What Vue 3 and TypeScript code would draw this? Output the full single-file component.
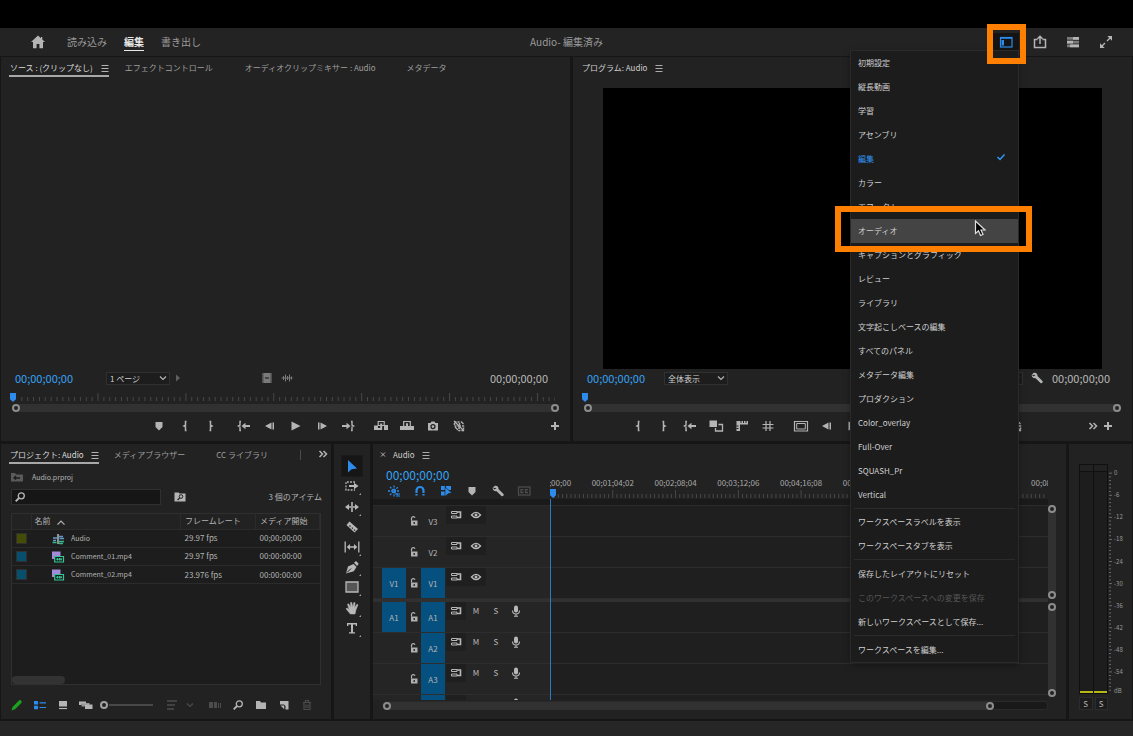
<script setup lang="ts">
interface MenuItem {
  label: string
  state?: 'checked' | 'hover' | 'disabled'
}

const icons: Record<string, string> = {
  home: '<path d="M8 1.500 1 8h2v6.200h3.600V10h2.800v4.200H13V8h2L12.300 5.400V3H11v1.200z" fill="currentColor"/>',
  burger: '<path d="M4.500 5.500h7M4.500 8.500h7M4.500 11.500h7" stroke="currentColor" opacity=".8" fill="none"/>',
  workspace: '<rect x="2.500" y="3.500" width="11.500" height="9.500" fill="none" stroke="currentColor" stroke-width="1.200"/><path d="M2 4h12" stroke="currentColor" stroke-width="1.500"/><path d="M3.500 6h2.500v5.500H3.500z" fill="currentColor"/>',
  share: '<path d="M5.500 5.500H2.500V13.500h11V5.500H10.500M8 10V2.500M5.500 4.800 8 2.300l2.500 2.500" fill="none" stroke="currentColor" stroke-width="1.500"/>',
  progress: '<path d="M2 3h12v2.800H2zM2 6.700h12v2.800H2zM2 10.400h12v2.800H2z" fill="currentColor" opacity=".6"/><path d="M8 3h6v2.800H8zM2 6.700h6v2.800H2zM5 10.400h9v2.800H5z" fill="currentColor"/>',
  expand: '<path d="M9 7l4-4M7 9l-4 4" stroke="currentColor" stroke-width="1.300"/><path d="M9.300 2H14v4.700zM2 9.300V14h4.700z" fill="currentColor"/>',
  check: '<path d="M4.500 8l2.500 2.500L11.500 5.500" fill="none" stroke="currentColor" stroke-width="1.500"/>',
  chevron: '<path d="M5 6.500 8 9.500 11 6.500" fill="none" stroke="currentColor" stroke-width="1.200"/>',
  caretUp: '<path d="M4 11 8 7l4 4" fill="none" stroke="currentColor" stroke-width="1.500"/>',
  right: '<path d="M6 4.500v7L10 8z" fill="currentColor"/>',
  film: '<path d="M3.500 3h9v10h-9z" fill="currentColor"/><path d="M6 8h4" stroke="#222" stroke-width="1.200"/><path d="M4.500 3.500v9M11.500 3.500v9" stroke="#222" stroke-dasharray="1 1" opacity=".5"/>',
  wave: '<path d="M2.500 8h11M4.500 6v4M6.500 4.500v7M8.500 6v4M10.500 4.500v7M12.500 6.500v3" stroke="currentColor" fill="none"/>',
  marker: '<path d="M4.500 4h7v5L8 12.500 4.500 9z" fill="currentColor"/>',
  markIn: '<path d="M9.500 3.500H8.500v3.700L7 8l1.500.800v3.700h1" fill="none" stroke="currentColor" stroke-width="1.500"/>',
  markOut: '<path d="M6.500 3.500h1v3.700L9 8l-1.500.800v3.700h-1" fill="none" stroke="currentColor" stroke-width="1.500"/>',
  goIn: '<path d="M5 3.500H4v3.700L2.500 8 4 8.800v3.700h1" fill="none" stroke="currentColor" stroke-width="1.400"/><path d="M5.500 8l4-3.200v2.200H14v2H9.500v2.200z" fill="currentColor"/>',
  goOut: '<path d="M11 3.500h1v3.700l1.500.800-1.500.800v3.700h-1" fill="none" stroke="currentColor" stroke-width="1.400"/><path d="M10.500 8l-4-3.200V7H2v2h4.500v2.200z" fill="currentColor"/>',
  stepBack: '<path d="M9.500 4.500v7L3 8zM10.500 4.500H12v7h-1.500z" fill="currentColor"/>',
  stepFwd: '<path d="M6.500 4.500v7L13 8zM4 4.500h1.500v7H4z" fill="currentColor"/>',
  play: '<path d="M3.500 3.500v9L12.500 8z" fill="currentColor"/>',
  insert: '<path d="M1 7.500h4v4.500H1zM11 7h4v5h-4zM1 10h8v2H1z" fill="currentColor"/><path d="M5.200 3.500h6v4h-6z" fill="#222" stroke="currentColor" stroke-width="1.200"/><path d="M7.200 5.500h2V12h-2z" fill="currentColor"/>',
  overwrite: '<path d="M1 8h14v4H1z" fill="currentColor"/><path d="M4.700 3.500h6.600v5H4.700z" fill="#222" stroke="currentColor" stroke-width="1.200"/><path d="M7 5.300h2V9H7z" fill="currentColor"/>',
  camera: '<path d="M3 5h2.500l1-1.500h3l1 1.500H13v7.500H3z" fill="currentColor"/><circle cx="8" cy="8.600" r="2" fill="none" stroke="#222" stroke-width="1.300"/>',
  compare: '<path d="M3.500 4h5v4h-5zM8 8h4.500v4.500H8z" fill="none" stroke="currentColor" stroke-dasharray="2 1" stroke-width="1.500"/><path d="M3 3l10 10M10 3.500l2.500 2.500M4 9l3 3" stroke="currentColor" stroke-width="1.200"/>',
  plus: '<path d="M7 4h2v3h3v2H9v3H7V9H4V7h3z" fill="currentColor"/>',
  proxy: '<path d="M1.500 2.500h7.500v6.500H1.500z" fill="currentColor"/><path d="M10.500 6.500h4v6.500H7.500v-3" fill="none" stroke="currentColor" stroke-width="1.300"/>',
  rulers: '<path d="M2.500 3H14v3.500H6V13H2.500z" fill="currentColor"/><path d="M7 3v2M9.500 3v2M12 3v2M2.500 8h2M2.500 10.500h2" stroke="#222"/>',
  grid: '<path d="M6 3v10M10 3v10M2.500 6.500h11M2.500 10h11" stroke="currentColor" stroke-width="1.200"/>',
  safe: '<path d="M1.500 3.500h13v9.500h-13z" fill="none" stroke="currentColor" stroke-width="1.200"/><path d="M3.700 5.500h8.600V11H3.700z" fill="none" stroke="currentColor"/>',
  more: '<path d="M4.500 5l3 3-3 3M8.500 5l3 3-3 3" fill="none" stroke="currentColor" stroke-width="1.500"/>',
  wrench: '<path d="M2.700 4.800 4.800 2.800c2.200-.600 4 .900 3.700 3.100l5 5c.900 1.200-.800 2.900-2 2L6.600 8.300C4.400 8.700 2.400 7 2.700 4.800l2 1.700L6.500 5z" fill="currentColor"/>',
  folder: '<path d="M3 4h4l1 1.500h5V12H3z" fill="currentColor"/>',
  folderUp: '<path d="M2 4h4l1 1.500h7V12.500H2z" fill="currentColor"/><path d="M5 9h6M7 7 5 9l2 1.500" fill="none" stroke="#1c1c1c" stroke-width="1.300"/>',
  folderFind: '<path d="M2.500 3.500h4l1 1h6V12.500h-11z" fill="currentColor"/><circle cx="9" cy="7.500" r="1.800" fill="none" stroke="#222"/><path d="M7.700 9 5.500 11" stroke="#222" stroke-width="1.200"/>',
  find: '<circle cx="9.300" cy="6.800" r="3" fill="none" stroke="currentColor" stroke-width="1.300"/><path d="M7 9 3.700 12.300" stroke="currentColor" stroke-width="1.800"/>',
  sequence: '<path d="M3 7h4M3 9.500h3M9 5.500h4M9.500 7.500H14" stroke="#5f9bc9" stroke-width="1.300"/><path d="M2.500 11.500h4M9 10.500h5M9 12.500h4" stroke="#35b98c" stroke-width="1.300"/><path d="M8 3v10" stroke="#c4c4c4" stroke-width="1.400"/>',
  clip: '<path d="M2 2.500h8.500V10H2z" fill="#a28bd8"/><path d="M4 7.500h3" stroke="#51427d"/><path d="M4.700 7.500h8.800V13H4.700z" fill="#1c1c1c" stroke="#36c496" stroke-width="1.200"/><path d="M6 10.200h6M7.500 9v2.500M9.500 9v2.500M11 9v2.500" stroke="#36c496"/>',
  pencil: '<path d="M2.500 13.500l1-3.500L10 3.500c1-1.300 3.500 1 2.500 2.300L6 12.300z" fill="currentColor"/>',
  list: '<path d="M2 4h4v3.500H2zM2 8.700h4V12.200H2z" fill="currentColor"/><path d="M7.500 5.800H14M7.500 10.500H14" stroke="currentColor" stroke-width="1.200"/>',
  icon: '<path d="M4 4h8v5.500H4z" fill="currentColor"/><path d="M4 11.500h8" stroke="currentColor" stroke-width="1.200"/>',
  freeform: '<path d="M1 4.500h7v2H3.500V8H1z" fill="currentColor"/><path d="M3.500 6h8v3.500h-8z" fill="currentColor" opacity=".8"/><path d="M7 7.500h7.500V12H7z" fill="currentColor"/>',
  sort: '<path d="M3 4h10M3 8h8M3 12h7" stroke="currentColor" stroke-width="1.500"/>',
  auto: '<path d="M2 5h4v6H2zM7 5h3v6H7zM11 6h1v5h-1zM13 6h1v5h-1z" fill="currentColor"/>',
  newItem: '<path d="M4 4h8.500v8.500H9.500V9L8 7.500H4z" fill="currentColor"/><path d="M4.500 8.500h3.700v3.700z" fill="currentColor"/>',
  trash: '<path d="M4 5.500h8M6.500 5V3.500h3V5M5 6v6.500h6V6M7 7.500v3.500M9 7.500v3.500" fill="none" stroke="currentColor" stroke-width="1.200"/>',
  select: '<path d="M4 2v12.500l3.500-3.200 5.500-.800z" fill="currentColor"/>',
  trackSel: '<path d="M11 4H2v8h9" fill="none" stroke="currentColor" stroke-width="1.300" stroke-dasharray="1.800 1.300"/><path d="M5 7h5V4.800L14.500 8 10 11.200V9H5z" fill="currentColor"/>',
  ripple: '<path d="M8 3v10" stroke="currentColor" stroke-width="1.600"/><path d="M1 8l4-3v2.300h2v1.400H5V11zM15 8l-4-3v2.300H9v1.400h2V11z" fill="currentColor"/>',
  razor: '<path d="M5.500 2.500 14 10l-3.500 3.500L2.500 6z" fill="currentColor"/><path d="M5.500 6.500l1 1M7.800 8.600l1 1M10 10.700l1 1" stroke="#222" stroke-width="1.200"/>',
  slip: '<path d="M1.200 2.500v11M14.800 2.500v11" stroke="currentColor" stroke-width="1.300"/><path d="M2.700 8 6 5v2.300h4V5l3.300 3-3.300 3V8.700H6V11z" fill="currentColor"/>',
  pen: '<path d="M2 14.500 4 7.500 9.500 5l3 3-2.700 4.300z" fill="currentColor"/><path d="M10 3.800 12 2l2.700 2.700-1.600 2.200z" fill="currentColor"/><path d="M3 13.500l4-4" stroke="#222"/>',
  rect: '<path d="M2 3h12v10H2z" fill="#555" stroke="currentColor" stroke-width="1.300"/>',
  hand: '<path d="M6.300 14 2 8.800l1-.900 2.200 1.500L3.500 4.200l1.200-.400L6.700 7.500 6.500 2.500h1.300L8.700 7.200l1.200-4.700 1.200.200-.500 5 2.400-3.500 1 .600-2 5L11 14z" fill="currentColor" stroke="currentColor" stroke-width=".5"/>',
  type: '<path d="M3 3h10v3h-1.300V4.500H9v7.800h2V13.500H5v-1.200h2V4.500H4.300V6H3z" fill="currentColor"/>',
  nest: '<path d="M2 8h12M4 4l8 8M4 12l8-8M8 2.500v11" stroke="currentColor" stroke-width="1.300" stroke-dasharray="2 1"/><path d="M9 11h5M10 13h4" stroke="currentColor"/>',
  magnet: '<path d="M4.500 12.500V7.500a3.500 3.500 0 0 1 7 0v5" fill="none" stroke="currentColor" stroke-width="2.200"/><path d="M3 10.500h3M10 10.500h3" stroke="#222"/>',
  linked: '<path d="M3 3h4v4H3zM8 3h5v4H8zM3 8.500h4v4H3z" fill="currentColor"/><path d="M7 4l7 6-3.500.500L7 13.500z" fill="currentColor" stroke="#222" stroke-width=".7"/>',
  captions: '<rect x="2.500" y="4" width="11.500" height="8" fill="none" stroke="currentColor" stroke-width="1.300"/><path d="M7.500 6.700H5v2.800h2.500M12 6.700H9.500v2.800H12" fill="none" stroke="currentColor" stroke-width="1.300"/>',
  lock: '<path d="M5 7.500h6.500v5H5z" fill="currentColor"/><path d="M5.500 7.500V5.200c.500-2 3-2 3.500-.400" fill="none" stroke="currentColor" stroke-width="1.200"/><path d="M8.200 9v2" stroke="#222" stroke-width="1.300"/>',
  sync: '<path d="M3.500 4.500H9v2H3.500zM3.500 9H9v2H3.500z" fill="none" stroke="currentColor"/><path d="M9 5h3.500v5.500H9" fill="none" stroke="currentColor" stroke-width="1.600"/>',
  eye: '<path d="M3.500 8Q8 2.700 12.500 8 8 13.300 3.500 8z" fill="none" stroke="currentColor" stroke-width="1.400"/><circle cx="8" cy="8" r="1.500" fill="currentColor"/>',
  mic: '<rect x="6" y="2.500" width="4" height="7" rx="2" fill="currentColor"/><path d="M4.500 7.500a3.500 3.500 0 0 0 7 0M8 11v2.500M6 13.300h4" fill="none" stroke="currentColor" stroke-width="1.100"/>',
  close: '<path d="M6 6.500l4 4M10 6.500l-4 4" stroke="currentColor"/>',
}

const menuGroups: MenuItem[][] = [
  [
    { label: '初期設定' },
    { label: '縦長動画' },
    { label: '学習' },
    { label: 'アセンブリ' },
    { label: '編集', state: 'checked' },
    { label: 'カラー' },
    { label: 'エフェクト' },
    { label: 'オーディオ', state: 'hover' },
    { label: 'キャプションとグラフィック' },
    { label: 'レビュー' },
    { label: 'ライブラリ' },
    { label: '文字起こしベースの編集' },
    { label: 'すべてのパネル' },
    { label: 'メタデータ編集' },
    { label: 'プロダクション' },
    { label: 'Color_overlay' },
    { label: 'Full-Over' },
    { label: 'SQUASH_Pr' },
    { label: 'Vertical' },
  ],
  [{ label: 'ワークスペースラベルを表示' }, { label: 'ワークスペースタブを表示' }],
  [
    { label: '保存したレイアウトにリセット' },
    { label: 'このワークスペースへの変更を保存', state: 'disabled' },
    { label: '新しいワークスペースとして保存...' },
  ],
  [{ label: 'ワークスペースを編集...' }],
]

const sourceTransport = [
  ['marker', 'markIn', 'markOut'],
  ['goIn', 'stepBack', 'play', 'stepFwd', 'goOut'],
  ['insert', 'overwrite', 'camera', 'compare'],
]
const programTransport = [
  ['markIn', 'markOut', 'goIn', 'proxy', 'rulers', 'grid'],
  ['safe', 'stepBack', 'play', 'stepFwd', 'goOut'],
  ['insert', 'overwrite', 'camera', 'compare'],
]
const clips = [
  { name: 'Audio', icon: 'sequence', rate: '29.97 fps', start: '00;00;00;00', tint: 'olive' },
  { name: 'Comment_01.mp4', icon: 'clip', rate: '29.97 fps', start: '00:00:00:00', tint: 'teal' },
  { name: 'Comment_02.mp4', icon: 'clip', rate: '23.976 fps', start: '00:00:00:00', tint: 'teal' },
]
const tools = ['select', 'trackSel', 'ripple', 'razor', 'slip', 'pen', 'rect', 'hand', 'type']
const flyout = new Set(['trackSel', 'ripple', 'slip', 'pen', 'rect', 'hand', 'type'])
const timelineTools = ['nest', 'magnet', 'linked', 'marker', 'wrench', 'captions']
const videoTracks = [
  { name: 'V3', on: false },
  { name: 'V2', on: false },
  { name: 'V1', on: true },
]
const audioTracks = [
  { name: 'A1', patched: true },
  { name: 'A2', patched: false },
  { name: 'A3', patched: false },
  { name: 'A4', patched: false },
]
const timeLabels = ['00;00;00;00', '00;01;04;02', '00;02;08;04', '00;03;12;06', '00;04;16;08', '00;05;20;10', '00;06;24;12', '00;07;28;14', '00;08;32;16']
const pct = (n: number, total: number) => `${(n / total) * 100}%`
const dbLabels = ['0', '-6', '-12', '-18', '-24', '-30', '-36', '-42', '-48', '-54']
const dbPos = (step: number) => `${4 + step * 9.6}%`
</script>

<template>
  <div class="app">
    <div class="letterbox"></div>
    <header class="top">
      <button class="ib home" aria-label="ホーム"><svg class="ic" viewBox="0 0 16 16" v-html="icons.home" /></button>
      <nav class="modes">
        <a href="#">読み込み</a>
        <a href="#" class="current">編集</a>
        <a href="#">書き出し</a>
      </nav>
      <h1 class="doc">Audio- 編集済み</h1>
      <div class="top-actions">
        <div class="ws">
          <button class="ws-btn" aria-label="ワークスペース"><svg class="ic" viewBox="0 0 16 16" v-html="icons.workspace" /></button>
          <div class="menu" role="menu">
            <div v-for="(group, g) in menuGroups" :key="g" class="menu-group">
              <button v-for="item in group" :key="item.label" class="item" :class="item.state" role="menuitem" :disabled="item.state === 'disabled'">
                {{ item.label }}
                <svg v-if="item.state === 'checked'" class="ic check" viewBox="0 0 16 16" v-html="icons.check" />
                <template v-if="item.state === 'hover'">
                  <span class="frame frame-item"></span>
                  <svg class="cursor" viewBox="0 0 12 18"><path d="M1.500 1v12.500l3-2.700 2 4.700 2.500-1-2-4.500H11z" fill="#000" stroke="#ddd" stroke-width="1.200" /></svg>
                </template>
              </button>
            </div>
          </div>
          <span class="frame frame-btn"></span>
        </div>
        <button v-for="n in ['share', 'progress', 'expand']" :key="n" class="ib wide" :aria-label="n"><svg class="ic" viewBox="0 0 16 16" v-html="icons[n]" /></button>
      </div>
    </header>

    <div class="upper">
      <section class="panel">
        <div class="tabs">
          <button class="tab active t-source">ソース : (クリップなし)<svg class="ic" viewBox="0 0 16 16" v-html="icons.burger" /></button>
          <button class="tab t-fx">エフェクトコントロール</button>
          <button class="tab t-mixer">オーディオクリップミキサー : Audio</button>
          <button class="tab">メタデータ</button>
        </div>
        <div class="view"></div>
        <div class="controls">
          <span class="tc blue">00;00;00;00</span>
          <span class="pick pick-source">
            <select aria-label="ページ"><option>1 ページ</option></select>
            <svg class="ic" viewBox="0 0 16 16" v-html="icons.chevron" />
          </span>
          <svg class="ic dim" viewBox="0 0 16 16" v-html="icons.right" />
          <span class="drag">
            <svg class="ic" viewBox="0 0 16 16" v-html="icons.film" />
            <svg class="ic" viewBox="0 0 16 16" v-html="icons.wave" />
          </span>
          <span class="tc end">00;00;00;00</span>
        </div>
        <div class="ruler">
          <i class="head"></i>
          <svg class="ticks">
            <line v-for="i in 92" :key="i" :x1="pct(i, 92)" :x2="pct(i, 92)" :y1="i % 15 === 14 ? 4 : 8" y2="12" />
          </svg>
        </div>
        <div class="range"><i></i><i></i></div>
        <div class="transport source-bar">
          <div v-for="(grp, g) in sourceTransport" :key="g" class="grp">
            <button v-for="n in grp" :key="n" class="ib" :aria-label="n"><svg class="ic" viewBox="0 0 16 16" v-html="icons[n]" /></button>
          </div>
          <button class="ib" aria-label="追加"><svg class="ic" viewBox="0 0 16 16" v-html="icons.plus" /></button>
        </div>
      </section>

      <section class="panel">
        <div class="tabs">
          <button class="tab lit">プログラム: Audio<svg class="ic" viewBox="0 0 16 16" v-html="icons.burger" /></button>
        </div>
        <div class="view"><div class="video"></div></div>
        <div class="controls">
          <span class="tc blue">00;00;00;00</span>
          <span class="pick pick-fit">
            <select aria-label="ズーム"><option>全体表示</option></select>
            <svg class="ic" viewBox="0 0 16 16" v-html="icons.chevron" />
          </span>
          <span class="pick pick-quality">
            <select aria-label="再生時の解像度"><option>1/2</option></select>
            <svg class="ic" viewBox="0 0 16 16" v-html="icons.chevron" />
          </span>
          <button class="ib setup" aria-label="設定"><svg class="ic" viewBox="0 0 16 16" v-html="icons.wrench" /></button>
          <span class="tc">00;00;00;00</span>
        </div>
        <div class="ruler"><i class="head"></i></div>
        <div class="range"><i></i><i></i></div>
        <div class="transport program-bar">
          <div v-for="(grp, g) in programTransport" :key="g" class="grp">
            <button v-for="n in grp" :key="n" class="ib" :aria-label="n"><svg class="ic" viewBox="0 0 16 16" v-html="icons[n]" /></button>
          </div>
          <div class="tail">
            <button class="ib" aria-label="その他"><svg class="ic" viewBox="0 0 16 16" v-html="icons.more" /></button>
            <button class="ib" aria-label="追加"><svg class="ic" viewBox="0 0 16 16" v-html="icons.plus" /></button>
          </div>
        </div>
      </section>
    </div>

    <div class="lower">
      <section class="panel project">
        <div class="tabs">
          <button class="tab active t-project">プロジェクト: Audio<svg class="ic" viewBox="0 0 16 16" v-html="icons.burger" /></button>
          <button class="tab t-media">メディアブラウザー</button>
          <button class="tab">CC ライブラリ</button>
          <span class="cut"></span>
          <button class="ib overflow" aria-label="その他のパネル"><svg class="ic" viewBox="0 0 16 16" v-html="icons.more" /></button>
        </div>
        <div class="path"><svg class="ic" viewBox="0 0 16 16" v-html="icons.folderUp" />Audio.prproj</div>
        <div class="search">
          <label class="field"><svg class="ic" viewBox="0 0 16 16" v-html="icons.find" /><input type="text" aria-label="検索" /></label>
          <button class="ib" aria-label="検索ビン"><svg class="ic" viewBox="0 0 16 16" v-html="icons.folderFind" /></button>
          <span class="count">3 個のアイテム</span>
        </div>
        <div class="bin">
          <table>
            <colgroup><col class="c-tint" /><col /><col class="c-rate" /><col class="c-start" /></colgroup>
            <thead>
              <tr>
                <th></th>
                <th class="name">名前<svg class="ic" viewBox="0 0 16 16" v-html="icons.caretUp" /></th>
                <th>フレームレート</th>
                <th>メディア開始</th>
              </tr>
            </thead>
            <tbody>
              <tr v-for="c in clips" :key="c.name">
                <td><i class="swatch" :class="c.tint"></i></td>
                <td class="file"><svg class="ic" viewBox="0 0 16 16" v-html="icons[c.icon]" />{{ c.name }}</td>
                <td>{{ c.rate }}</td>
                <td>{{ c.start }}</td>
              </tr>
            </tbody>
          </table>
          <i class="thumb"></i>
        </div>
        <div class="bin-tools">
          <button class="ib green" aria-label="書き込み可"><svg class="ic" viewBox="0 0 16 16" v-html="icons.pencil" /></button>
          <button class="ib on" aria-label="リスト表示"><svg class="ic" viewBox="0 0 16 16" v-html="icons.list" /></button>
          <button class="ib" aria-label="アイコン表示"><svg class="ic" viewBox="0 0 16 16" v-html="icons.icon" /></button>
          <button class="ib" aria-label="フリーフォーム表示"><svg class="ic" viewBox="0 0 16 16" v-html="icons.freeform" /></button>
          <input class="zoom" type="range" min="0" max="100" value="0" aria-label="サイズ" />
          <button class="ib off" aria-label="並べ替え"><svg class="ic" viewBox="0 0 16 16" v-html="icons.sort" /></button>
          <button class="ib off narrow" aria-label="並べ替えメニュー"><svg class="ic" viewBox="0 0 16 16" v-html="icons.chevron" /></button>
          <div class="bin-right">
            <button class="ib off" aria-label="シーケンスへオート編成"><svg class="ic" viewBox="0 0 16 16" v-html="icons.auto" /></button>
            <button class="ib" aria-label="検索"><svg class="ic" viewBox="0 0 16 16" v-html="icons.find" /></button>
            <button class="ib" aria-label="新規ビン"><svg class="ic" viewBox="0 0 16 16" v-html="icons.folder" /></button>
            <button class="ib" aria-label="新規項目"><svg class="ic" viewBox="0 0 16 16" v-html="icons.newItem" /></button>
            <button class="ib off" aria-label="消去"><svg class="ic" viewBox="0 0 16 16" v-html="icons.trash" /></button>
          </div>
        </div>
      </section>

      <section class="panel toolbox">
        <button v-for="t in tools" :key="t" class="tool" :class="{ chosen: t === 'select', fly: flyout.has(t) }" :aria-label="t">
          <svg class="ic" viewBox="0 0 16 16" v-html="icons[t]" />
        </button>
      </section>

      <section class="panel timeline">
        <div class="tabs">
          <button class="ib close" aria-label="閉じる"><svg class="ic" viewBox="0 0 16 16" v-html="icons.close" /></button>
          <button class="tab lit">Audio<svg class="ic" viewBox="0 0 16 16" v-html="icons.burger" /></button>
        </div>
        <div class="tl-top">
          <div class="tl-info">
            <span class="tc big blue">00;00;00;00</span>
            <div class="tl-icons">
              <button v-for="(n, i) in timelineTools" :key="n" class="ib" :class="{ on: i < 3, off: n === 'captions' }" :aria-label="n"><svg class="ic" viewBox="0 0 16 16" v-html="icons[n]" /></button>
            </div>
          </div>
          <div class="tl-ruler">
            <svg class="ticks">
              <line v-for="i in 118" :key="i" :x1="pct(i, 119)" :x2="pct(i, 119)" :y1="i % 15 === 0 ? 26 : 30" y2="34" />
              <text v-for="(l, i) in timeLabels" :key="l" :x="pct(i * 15, 119)" y="22" text-anchor="middle">{{ l }}</text>
            </svg>
            <i class="head"></i>
          </div>
        </div>
        <div class="tl-body">
          <div class="tracks">
            <div class="strip"></div>
            <div v-for="t in videoTracks" :key="t.name" class="track">
              <div class="th">
                <button class="patch" :class="{ filled: t.on }">{{ t.on ? t.name : '' }}</button>
                <button class="lock" aria-label="ロック"><svg class="ic" viewBox="0 0 16 16" v-html="icons.lock" /></button>
                <button class="patch" :class="{ filled: t.on }">{{ t.name }}</button>
                <div class="opts">
                  <button class="opt dark" aria-label="同期ロック"><svg class="ic" viewBox="0 0 16 16" v-html="icons.sync" /></button>
                  <button class="opt dark" aria-label="表示"><svg class="ic" viewBox="0 0 16 16" v-html="icons.eye" /></button>
                </div>
              </div>
              <div class="lane"></div>
            </div>
            <div class="split"></div>
            <div v-for="t in audioTracks" :key="t.name" class="track">
              <div class="th">
                <button class="patch" :class="{ filled: t.patched }">{{ t.patched ? t.name : '' }}</button>
                <button class="lock" aria-label="ロック"><svg class="ic" viewBox="0 0 16 16" v-html="icons.lock" /></button>
                <button class="patch filled">{{ t.name }}</button>
                <div class="opts">
                  <button class="opt dark" aria-label="同期ロック"><svg class="ic" viewBox="0 0 16 16" v-html="icons.sync" /></button>
                  <button class="opt">M</button>
                  <button class="opt">S</button>
                  <button class="opt" aria-label="録音"><svg class="ic" viewBox="0 0 16 16" v-html="icons.mic" /></button>
                </div>
              </div>
              <div class="lane"></div>
            </div>
            <i class="playhead"></i>
          </div>
          <div class="vbars">
            <div class="vbar v-top"><i></i><i></i></div>
            <div class="vbar v-bottom"><i></i><i></i></div>
          </div>
        </div>
        <div class="hbar"><div class="hfill"><i></i><i></i></div></div>
      </section>

      <section class="panel meters">
        <div class="meter-row">
          <div class="meter"><span></span><span></span></div>
          <svg class="scale">
            <line v-for="i in 60" :key="i" x1="1" :x2="i % 6 === 1 ? 4 : 3" :y1="dbPos((i - 1) / 6)" :y2="dbPos((i - 1) / 6)" />
            <text v-for="(l, i) in dbLabels" :key="l" x="6" :y="dbPos(i)" dy="2">{{ l }}</text>
            <text x="6" y="99%" dy="1">dB</text>
          </svg>
        </div>
        <div class="solo"><button>S</button><button>S</button></div>
      </section>
    </div>

    <footer class="status"></footer>
  </div>
</template>

<style>
html,
body {
  background: #161616;
}
</style>

<style scoped>
.app {
  display: flex;
  flex-direction: column;
  height: 100vh;
  min-height: 600px;
  overflow: hidden;
  background: #161616;
  color: #b4b4b4;
  font: 8px/16px "Noto Sans CJK JP", "Noto Sans", sans-serif;
}
.app * { box-sizing: border-box; }
button {
  padding: 0;
  border: 0;
  background: none;
  color: inherit;
  font: inherit;
  white-space: nowrap;
}
.ic { width: 16px; height: 16px; flex: none; display: block; }
.ib { width: 26px; flex: none; display: flex; align-items: center; justify-content: center; color: #b4b4b4; }
.letterbox { height: 28px; flex: none; background: #000; }

.top {
  position: relative;
  z-index: 5;
  display: flex;
  align-items: center;
  height: 28px;
  flex: none;
  margin-bottom: 1px;
  padding: 0 11px 0 25px;
  background: #232323;
}
.modes { display: flex; gap: 17px; margin-left: 16px; font-size: 10px; }
.modes a { color: #9a9a9a; text-decoration: none; border-bottom: 1px solid transparent; }
.modes .current { color: #e8e8e8; border-color: #e8e8e8; font-weight: bold; }
.doc { position: absolute; left: 0; right: 0; margin: 0; text-align: center; font-size: 10px; font-weight: normal; color: #9a9a9a; pointer-events: none; }
.top-actions { display: flex; align-items: center; margin-left: auto; }
.wide { width: 33px; }
.ws { position: relative; margin-right: 4px; }
.ws-btn { display: flex; align-items: center; justify-content: center; width: 26px; height: 18px; background: #141414; color: #2d8ceb; }
.frame { position: absolute; border: 6px solid #ff7f00; z-index: 3; pointer-events: none; }
.frame-btn { inset: -9px -7px -13px -6px; }
.frame-item { inset: -13px -14px -9px -16px; }
.menu {
  position: absolute;
  top: 18px;
  right: 1px;
  width: 167px;
  background: #1c1c1c;
  box-shadow: 0 0 0 1px #2a2a2a, 0 2px 6px rgba(0, 0, 0, 0.5);
}
.menu-group + .menu-group::before { content: ""; display: block; height: 1px; margin: 1px 3px 2px; background: #2b2b2b; }
.menu-group:nth-child(2)::before { margin-bottom: 1px; }
.item { position: relative; display: block; width: 100%; height: 24px; padding: 0 7px; text-align: left; color: #d0d0d0; }
.item.hover { z-index: 2; background: #444; }
.item.checked { color: #3296f5; }
.item.disabled { color: #565656; }
.check { position: absolute; right: 9px; top: 2px; }
.cursor { position: absolute; right: 32px; top: 1px; width: 12px; height: 18px; z-index: 4; }

.upper { display: grid; grid-template-columns: 57fr 56fr; gap: 3px; flex: 384 1 0; min-height: 0; padding: 0 1px; margin-bottom: 3px; }
.lower { display: grid; grid-template-columns: 330px 36px 1fr 63px; gap: 3px; flex: 275 1 0; min-height: 0; padding: 0 1px; margin-bottom: 2px; }
.status { height: 15px; flex: none; background: #262626; }
.panel { display: flex; flex-direction: column; min-width: 0; min-height: 0; background: #222; }

.tabs { display: flex; height: 20px; flex: none; padding-left: 8px; color: #9e9e9e; }
.tab { display: flex; align-items: center; padding: 4px 0 0 1px; border-bottom: 2px solid transparent; }
.tab.active { color: #dadada; border-color: #a8a8a8; }
.tab.lit { color: #cecece; }
.tab .ic { margin: 0 -4px 0 4px; }
.timeline .tab .ic, .project .tab .ic { margin-left: 3px; }
.t-source { margin-right: 15px; }
.t-fx { margin-right: 31px; }
.t-mixer { margin-right: 30px; }
.view { flex: 1; min-height: 0; display: flex; justify-content: center; padding-top: 11px; }
.video { height: 100%; aspect-ratio: 16 / 9; background: #000; }

.controls { display: flex; align-items: center; height: 20px; flex: none; padding: 0 22px 2px 14px; }
.tc { font-size: 11px; color: #b8b8b8; }
.tc.blue { color: #36a2f4; }
.tc.end { margin-left: auto; }
.pick { position: relative; display: flex; align-items: center; height: 13px; }
.pick select { width: 100%; height: 13px; padding: 0 3px; border: 1px solid #303030; border-radius: 0; appearance: none; background: #1d1d1d; color: #cecece; font: inherit; line-height: 11px; }
.pick .ic { position: absolute; right: -1px; }
.pick-source { width: 64px; margin-left: 33px; }
.pick-fit { width: 64px; margin-left: 19px; }
.pick-quality { width: 64px; margin-left: auto; }
.setup { width: 29px; }
.dim { color: #606060; }
.drag { display: flex; gap: 4px; margin-left: 73px; color: #7a7a7a; }
.ruler { position: relative; height: 15px; flex: none; margin: 0 15px; }
.head { position: absolute; left: -6px; top: 4px; width: 6px; height: 9px; background: #2d8ceb; clip-path: polygon(0 0, 100% 0, 100% 70%, 50% 100%, 0 70%); }
.ticks { display: block; width: 100%; height: 100%; overflow: hidden; }
.ticks line { stroke: #484848; stroke-width: 1; }
.ticks text { fill: #a8a8a8; font-size: 8px; }
.range { display: flex; align-items: center; justify-content: space-between; height: 8px; flex: none; margin: 0 11px; background: #313131; border-radius: 4px; }
.range i, .vbar i, .hfill i { width: 8px; height: 8px; flex: none; border: 2px solid #8c8c8c; border-radius: 50%; background: #222; }
.transport { display: flex; align-items: center; height: 29px; flex: none; padding-bottom: 2px; }
.grp { display: flex; }
.grp + .grp { margin-left: 7px; }
.source-bar { padding-right: 2px; }
.source-bar::before { content: ""; flex: 145 1 0; }
.source-bar .grp:last-of-type { flex: 174 1 0; }
.program-bar { padding-left: 52px; }
.tail { display: flex; margin: 0 17px 0 auto; }
.tail .ib { width: 15px; }

.cut { width: 1px; height: 10px; margin: 6px 0 0 32px; background: #4a4a4a; }
.t-project { margin-right: 14px; }
.t-media { margin-right: 30px; }
.overflow { width: 16px; margin-left: auto; }
.path { display: flex; align-items: center; gap: 7px; height: 25px; flex: none; padding-left: 8px; font-size: 7px; }
.path .ic { color: #5a5a5a; }
.search { display: flex; align-items: center; height: 16px; flex: none; padding: 0 9px 0 10px; }
.field { display: flex; width: 150px; height: 16px; background: #161616; border: 1px solid #303030; color: #b8b8b8; align-items: center; }
.field input { flex: 1; min-width: 0; border: 0; outline: 0; background: none; color: inherit; font: inherit; }
.search .ib { width: 37px; }
.count { margin-left: auto; }
.bin { display: flex; flex-direction: column; justify-content: space-between; flex: 1; min-height: 0; margin: 8px 10px 0; background: #1c1d1c; border: 1px solid #303030; }
table { width: 100%; table-layout: fixed; border-collapse: collapse; }
.c-tint { width: 19px; }
.c-rate { width: 75px; }
.c-start { width: 64px; }
th, td { padding: 0 0 0 4px; height: 18px; line-height: 16px; text-align: left; font-weight: normal; white-space: nowrap; border-bottom: 1px solid #2b2b2b; }
th { height: 15px; line-height: 14px; background: #222; border-right: 1px solid #2b2b2b; }
th.name { padding-left: 3px; }
th .ic { display: inline-block; vertical-align: middle; height: 14px; margin-left: 2px; }
.file { font-size: 7px; }
.file .ic { display: inline-block; vertical-align: middle; margin: 0 5px 0 15px; }
.swatch { display: block; width: 11px; height: 11px; border: 1px solid #303030; }
.olive { background: #454c06; }
.teal { background: #064f6d; }
.thumb { width: 53px; height: 8px; border-radius: 4px; background: #333; }
.bin-tools { display: flex; align-items: center; height: 34px; flex: none; padding: 6px 13px 0 4px; }
.bin-tools .ib { width: 23px; }
.bin-tools .narrow { width: 14px; }
.bin-right { display: flex; margin-left: auto; }
.ib.green { color: #1da01d; }
.ib.on { color: #2d8ceb; }
.ib.off { color: #4c4c4c; }
.zoom { appearance: none; width: 53px; height: 8px; margin: 0 7px 0 3px; background: linear-gradient(#484848, #484848) center / 100% 2px no-repeat; }
.zoom::-webkit-slider-thumb { appearance: none; width: 8px; height: 8px; border: 2px solid #a0a0a0; border-radius: 50%; background: #222; box-shadow: 1px 0 0 #222; }

.toolbox { display: grid; grid-auto-rows: 1fr; justify-items: center; align-items: center; padding: 12px 0 81px; }
.tool { position: relative; display: flex; align-items: center; justify-content: center; width: 20px; height: 20px; color: #b8b8b8; }
.tool.chosen { background: #161616; color: #2d8ceb; outline: 1px solid #1a1a1a; }
.tool.fly::after { content: ""; position: absolute; right: 1px; bottom: 1px; border: 1px solid transparent; border-right-color: #a0a0a0; border-bottom-color: #a0a0a0; }

.timeline .tabs { padding-left: 1px; }
.close { width: 17px; }
.timeline .tab { padding-left: 2px; }
.tl-top { display: flex; height: 35px; flex: none; padding-right: 18px; }
.tl-info { width: 177px; flex: none; padding: 3px 0 0 13px; }
.big { display: block; font-size: 12px; height: 16px; }
.tl-icons { display: flex; height: 16px; margin-left: -5px; }
.tl-ruler { position: relative; flex: 1; min-width: 0; }
.tl-ruler .head { left: 0; top: 25px; }
.tl-body { display: flex; flex: 1; min-height: 0; }
.tracks { position: relative; flex: 1; min-width: 0; overflow: hidden; }
.strip { height: 7px; background: #1a1a1a; border-bottom: 1px solid #2b2b2b; }
.track { display: flex; height: 31px; border-bottom: 1px solid #2d2d2d; }
.split { height: 3px; background: #303030; }
.th { display: flex; width: 177px; flex: none; padding-left: 9px; background: #252525; }
.lane { flex: 1; background: #1f1f1f; }
.patch { width: 24px; height: 30px; padding-top: 1px; }
.patch.filled { background: #05507f; }
.lock { width: 15px; display: flex; align-items: center; justify-content: center; color: #b0b0b0; }
.opts { display: flex; height: 18px; margin-left: 1px; }
.opt { width: 20px; height: 18px; display: flex; align-items: center; justify-content: center; color: #b8b8b8; }
.opt.dark { background: #1f1f1f; }
.playhead { position: absolute; left: 177px; top: 0; bottom: 0; width: 1px; background: #2d78c4; }
.vbars { display: flex; flex-direction: column; width: 18px; padding: 6px 10px 3px 0; flex: none; }
.vbar { display: flex; flex-direction: column; justify-content: space-between; background: #313131; border-radius: 4px; flex: 1; }
.v-top { margin-bottom: 4px; }
.hbar { height: 9px; flex: none; margin: 1px 18px 9px 9px; background: #191919; border: 1px solid #2a2a2a; border-radius: 4px; display: flex; align-items: center; }
.hfill { display: flex; align-items: center; justify-content: space-between; width: 92%; height: 8px; border-radius: 4px; background: #313131; }

.meters { padding: 20px 0 9px 10px; }
.meter-row { display: flex; flex: 1; min-height: 0; }
.meter { display: flex; width: 29px; border: 1px solid #101010; background: #1c1d1c; }
.meter span { flex: 1; border-bottom: 2px solid #b8b814; background: linear-gradient(#222 6px, #101010 6px, #101010 7px, transparent 7px); }
.meter span + span { box-shadow: -1px 0 0 #101010; }
.scale { flex: 1; min-width: 0; height: 100%; }
.scale line { stroke: #6c6c6c; stroke-width: 1; }
.scale text { fill: #9a9a9a; font-size: 6px; }
.solo { display: flex; gap: 2px; width: 29px; margin-top: 3px; }
.solo button { flex: 1; height: 13px; line-height: 11px; border: 1px solid #2c2c2c; background: #1c1c1c; }
</style>
